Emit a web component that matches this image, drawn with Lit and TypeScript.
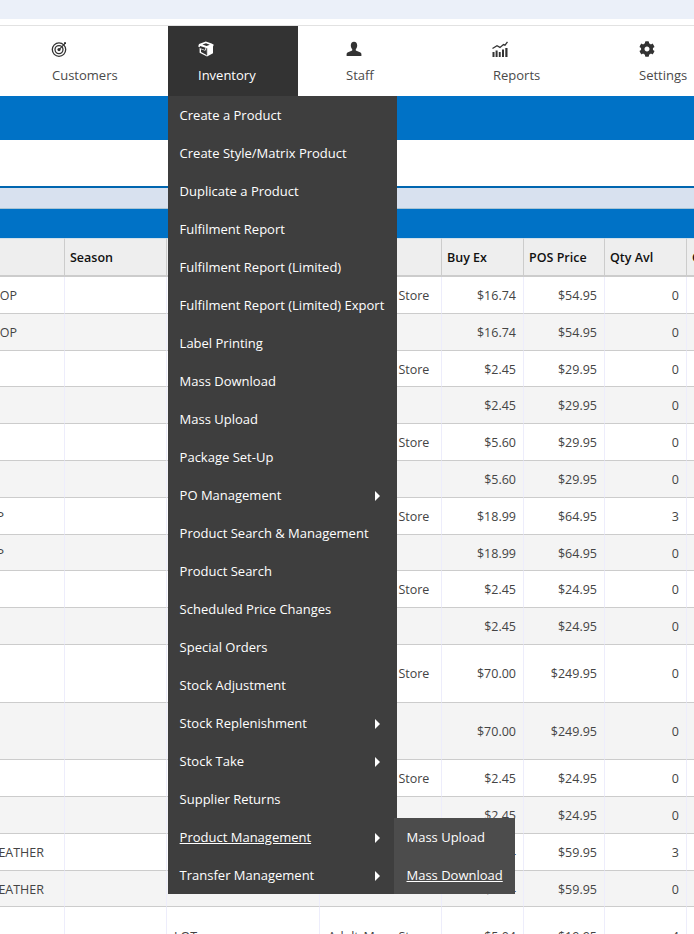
import { LitElement, html, css, svg } from "lit";
import { customElement } from "lit/decorators.js";

const ICONS: Record<string, unknown> = {
  target: svg`<circle cx="8" cy="8.6" r="6.7" fill="none" stroke="currentColor" stroke-width="1.3"/><circle cx="8" cy="8.6" r="4" fill="none" stroke="currentColor" stroke-width="1.3"/><circle cx="8" cy="8.6" r="1.6" fill="currentColor"/><path d="M8 8.6 14.4 2.2" stroke="currentColor" stroke-width="1.2" fill="none"/><path d="M13 1.2h2v1.8h-2z" fill="currentColor"/>`,
  box: svg`<path fill="currentColor" d="M7.8 .6 1 3l-.8 2.6 1.4.6v5.6L9 15.6l6-3.4V5.4l.8-1.6L13.6 2.4zM4.4 3.4 8 2.2l3.8 1.5L8.6 5zM2 5l5.6 1.8-.8 2.2L1.6 7zM3 8.2l4.2 1.6 1-2 .4 6.2-5.6-3z"/><path fill="none" stroke="#333" stroke-width=".9" d="M8.7 7.2V14.4"/>`,
  user: svg`<path fill="currentColor" d="M8 .8C5.900.8 4.800 2.500 4.800 4.500c0 1.500.6 2.800 1.400 3.600v1.500L1.500 11.500C.9 11.800.6 12.400.6 13v2h14.800v-2c0-.6-.3-1.200-.9-1.500L9.800 9.600V8.100c.8-.8 1.400-2.100 1.400-3.600C11.200 2.500 10.100.8 8 .8z"/>`,
  chart: svg`<path fill="currentColor" d="M.5 11h2v5h-2zM3.600 9.500h2V16h-2zM6.800 11h1.900v5H6.800zM10 8.500h2V16h-2zM13.300 7h2.200v9h-2.200z"/><path fill="none" stroke="currentColor" stroke-width="1.300" d="M.5 7.500 5 4.800l3 1.600 3.500-2.800 1.500.6L15.500.8"/>`,
  gear: svg`<g transform="scale(.03125)"><path fill="currentColor" d="M487.400 315.700l-42.600-24.600c4.300-23.200 4.300-47 0-70.200l42.600-24.600c4.900-2.800 7.100-8.600 5.500-14-11.100-35.600-30-67.800-54.700-94.600-3.800-4.100-10-5.100-14.800-2.300L380.800 110c-17.900-15.400-38.500-27.300-60.800-35.100V25.800c0-5.600-3.900-10.500-9.400-11.700-36.700-8.200-74.300-7.800-109.200 0-5.500 1.200-9.400 6.100-9.400 11.700V75c-22.200 7.900-42.800 19.800-60.800 35.100L88.700 85.500c-4.900-2.800-11-1.900-14.800 2.300-24.700 26.700-43.600 58.900-54.700 94.600-1.700 5.400.6 11.200 5.500 14L67.300 221c-4.300 23.200-4.300 47 0 70.200l-42.600 24.600c-4.900 2.800-7.100 8.600-5.500 14 11.100 35.600 30 67.800 54.700 94.600 3.800 4.100 10 5.100 14.800 2.300l42.600-24.600c17.900 15.400 38.500 27.300 60.800 35.100v49.200c0 5.600 3.900 10.500 9.400 11.700 36.700 8.200 74.300 7.800 109.200 0 5.500-1.200 9.400-6.100 9.400-11.700v-49.200c22.200-7.900 42.800-19.800 60.800-35.100l42.600 24.600c4.900 2.800 11 1.900 14.800-2.300 24.700-26.700 43.600-58.900 54.700-94.600 1.500-5.500-.7-11.300-5.600-14.100zM256 336c-44.100 0-80-35.900-80-80s35.900-80 80-80 80 35.900 80 80-35.900 80-80 80z"/></g>`,
};

const NAV = [
  { label: "Customers", icon: "target", width: 168, pad: 52 },
  { label: "Inventory", icon: "box", width: 130, pad: 30, active: true },
  { label: "Staff", icon: "user", width: 150, pad: 48 },
  { label: "Reports", icon: "chart", width: 140, pad: 45 },
  { label: "Settings", icon: "gear", width: 106, pad: 51 },
];

const MENU: { t: string; sub?: boolean; hover?: boolean }[] = [
  { t: "Create a Product" },
  { t: "Create Style/Matrix Product" },
  { t: "Duplicate a Product" },
  { t: "Fulfilment Report" },
  { t: "Fulfilment Report (Limited)" },
  { t: "Fulfilment Report (Limited) Export" },
  { t: "Label Printing" },
  { t: "Mass Download" },
  { t: "Mass Upload" },
  { t: "Package Set-Up" },
  { t: "PO Management", sub: true },
  { t: "Product Search & Management" },
  { t: "Product Search" },
  { t: "Scheduled Price Changes" },
  { t: "Special Orders" },
  { t: "Stock Adjustment" },
  { t: "Stock Replenishment", sub: true },
  { t: "Stock Take", sub: true },
  { t: "Supplier Returns" },
  { t: "Product Management", sub: true, hover: true },
  { t: "Transfer Management", sub: true },
];

type Row = { h: number; c?: string; end?: number; lot?: string; store?: boolean; buy: string; pos: string; qty: string };
const ROWS: Row[] = [
  { h: 37, c: "TOP", end: 18, store: true, buy: "$16.74", pos: "$54.95", qty: "0" },
  { h: 37, c: "TOP", end: 18, buy: "$16.74", pos: "$54.95", qty: "0" },
  { h: 36, store: true, buy: "$2.45", pos: "$29.95", qty: "0" },
  { h: 37, buy: "$2.45", pos: "$29.95", qty: "0" },
  { h: 37, store: true, buy: "$5.60", pos: "$29.95", qty: "0" },
  { h: 37, buy: "$5.60", pos: "$29.95", qty: "0" },
  { h: 37, c: "P", end: 5, store: true, buy: "$18.99", pos: "$64.95", qty: "3" },
  { h: 36, c: "P", end: 5, buy: "$18.99", pos: "$64.95", qty: "0" },
  { h: 37, store: true, buy: "$2.45", pos: "$24.95", qty: "0" },
  { h: 37, buy: "$2.45", pos: "$24.95", qty: "0" },
  { h: 58, store: true, buy: "$70.00", pos: "$249.95", qty: "0" },
  { h: 57, buy: "$70.00", pos: "$249.95", qty: "0" },
  { h: 37, store: true, buy: "$2.45", pos: "$24.95", qty: "0" },
  { h: 37, buy: "$2.45", pos: "$24.95", qty: "0" },
  { h: 37, c: "EATHER", end: 45, store: true, buy: "$5.04", pos: "$59.95", qty: "3" },
  { h: 36, c: "EATHER", end: 45, buy: "$5.04", pos: "$59.95", qty: "0" },
  { h: 58, lot: "LOT", store: true, buy: "$5.04", pos: "$19.95", qty: "4" },
];

@customElement("app-root")
export class AppRoot extends LitElement {
  static styles = css`
    :host {
      display: block;
      width: 694px;
      height: 934px;
      overflow: hidden;
      position: relative;
      background: #fff;
      font-family: "Open Sans", sans-serif;
      font-size: 12.5px;
      color: #444;
    }
    .top { height: 19px; background: #ebf0f9; }
    .nav {
      margin-top: 6px;
      height: 70px;
      border-top: 1px solid #e2e2e2;
      display: flex;
      position: relative;
      z-index: 2;
    }
    .item {
      flex: none;
      box-sizing: border-box;
      height: 70px;
      padding-top: 15px;
      color: #333;
      display: flex;
      flex-direction: column;
      position: relative;
    }
    .item svg { width: 16px; height: 16px; display: block; margin-left: -1px; }
    .item.active svg, .item.nudge svg { margin-left: 0; }
    .item .label { margin-top: 9px; font-size: 13px; line-height: 18px; color: #4a4a4a; white-space: nowrap; }
    .item.active { background: #333; color: #fff; }
    .item.active .label { color: #fff; }
    .menu {
      position: absolute;
      left: 0;
      top: 70px;
      width: 229px;
      background: #3e3e3e;
      color: #fff;
    }
    .mi {
      height: 38px;
      line-height: 38px;
      padding-left: 11.6px;
      font-size: 13px;
      white-space: nowrap;
      position: relative;
    }
    .mi.hover span { text-decoration: underline; }
    .arrow {
      position: absolute;
      left: 207px;
      top: 15px;
      width: 0;
      height: 0;
      border-left: 5px solid #fff;
      border-top: 5px solid transparent;
      border-bottom: 5px solid transparent;
    }
    .submenu {
      position: absolute;
      left: 226px;
      top: 722px;
      width: 121px;
      background: #4c4c4c;
      color: #fff;
    }
    .submenu .mi { padding-left: 12.5px; }
    .submenu .mi.hover { text-decoration: underline; }
    .band1 { height: 44px; background: #0072c6; }
    .white { height: 46px; }
    .line { height: 2px; background: #0066b0; }
    .pale { height: 20px; background: #d8e1ef; border-bottom: 1px solid #a9c4d4; }
    .band2 { height: 29px; background: #0072c6; }
    table {
      table-layout: fixed;
      width: 747px;
      border-collapse: separate;
      border-spacing: 0;
    }
    th {
      height: 36px;
      padding: 0 0 0 5px;
      background: #eee;
      border-top: 1px solid #cfe0ea;
      border-right: 1px solid #ccc;
      border-bottom: 2px solid #ccc;
      text-align: left;
      font-weight: 600;
      color: #111;
      font-size: 12.5px;
      white-space: nowrap;
      overflow: hidden;
    }
    td {
      box-sizing: border-box;
      padding: 1px 7px 0;
      border-right: 1px solid #ededfb;
      border-bottom: 1px solid #ccc;
      white-space: nowrap;
      overflow: hidden;
    }
    tr.first-tall td { padding-top: 0; }
    tr.alt td { background: #f4f4f4; }
    td.r { text-align: right; }
    td.clip { padding: 1px 0 0; }
    td.store { padding-left: 8px; word-spacing: 1.5px; }
    .tail { display: flex; justify-content: flex-end; overflow: hidden; }
  `;

  render() {
    return html`
      <div class="top"></div>
      <div class="nav">
        ${NAV.map(
          (n) => html`
            <div class="item ${n.active ? "active" : ""} ${n.icon === "user" || n.icon === "gear" ? "nudge" : ""}" style="width:${n.width}px;padding-left:${n.pad}px">
              <svg viewBox="0 0 16 16">${ICONS[n.icon]}</svg>
              <div class="label">${n.label}</div>
              ${n.active
                ? html`<div class="menu">
                    ${MENU.map(
                      (m) => html`<div class="mi ${m.hover ? "hover" : ""}"><span>${m.t}</span>${m.sub ? html`<i class="arrow"></i>` : ""}</div>`
                    )}
                    <div class="submenu">
                      <div class="mi">Mass Upload</div>
                      <div class="mi hover">Mass Download</div>
                    </div>
                  </div>`
                : ""}
            </div>
          `
        )}
      </div>
      <div class="band1"></div>
      <div class="white"></div>
      <div class="line"></div>
      <div class="pale"></div>
      <div class="band2"></div>
      <table>
        <colgroup>
          <col style="width:65px" /><col style="width:102px" /><col style="width:153px" /><col style="width:122px" />
          <col style="width:82px" /><col style="width:81px" /><col style="width:82px" /><col style="width:60px" />
        </colgroup>
        <thead>
          <tr>
            <th></th><th>Season</th><th></th><th></th><th>Buy Ex</th><th>POS Price</th><th>Qty Avl</th><th>On Order</th>
          </tr>
        </thead>
        <tbody>
          ${ROWS.map(
            (r, i) => html`
              <tr class="${i % 2 ? "alt" : ""} ${i === 10 ? "first-tall" : ""}" style="height:${r.h}px">
                <td class="clip"><div class="tail" style="padding-right:${65 - (r.end ?? 0)}px">${r.c ?? ""}</div></td>
                <td></td>
                <td>${r.lot ?? ""}</td>
                <td class="store">${r.store ? "Adult Mass Store" : ""}</td>
                <td class="r">${r.buy}</td>
                <td class="r">${r.pos}</td>
                <td class="r">${r.qty}</td>
                <td></td>
              </tr>
            `
          )}
        </tbody>
      </table>
    `;
  }
}
